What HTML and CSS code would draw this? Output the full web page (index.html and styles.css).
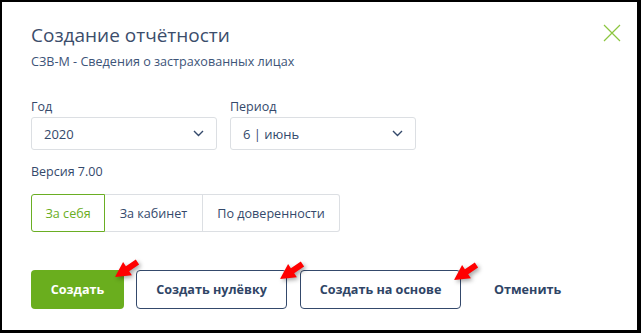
FILE: index.html
```html
<!DOCTYPE html>
<html lang="ru">
<head>
    <meta charset="utf-8">
    <link rel="stylesheet" href="styles.css">
</head>
<body>
    <!-- Окно создания отчётности -->
    <div class="frame">
        <div class="dialog">
            <div class="header">
                <div>
                    <h1 class="title">Создание отчётности</h1>
                    <div class="subtitle">СЗВ-М - Сведения о застрахованных лицах</div>
                </div>
                <svg class="close" width="18" height="18" viewBox="0 0 18 18">
                    <path d="M1 1L17 17M17 1L1 17" stroke="#8cc63f" stroke-width="1.2" fill="none"/>
                </svg>
            </div>

            <!-- Выбор года и периода -->
            <div class="fields">
                <div class="field">
                    <div class="label">Год</div>
                    <div class="select">
                        <span>2020</span>
                        <svg width="11" height="7" viewBox="0 0 11 7"><path d="M1 1L5.5 5.5L10 1" stroke="#34496b" stroke-width="1.4" fill="none"/></svg>
                    </div>
                </div>
                <div class="field">
                    <div class="label">Период</div>
                    <div class="select">
                        <span>6 | июнь</span>
                        <svg width="11" height="7" viewBox="0 0 11 7"><path d="M1 1L5.5 5.5L10 1" stroke="#34496b" stroke-width="1.4" fill="none"/></svg>
                    </div>
                </div>
            </div>

            <div class="version">Версия 7.00</div>

            <div class="tabs">
                <div class="tab active">За себя</div>
                <div class="tab">За кабинет</div>
                <div class="tab">По доверенности</div>
            </div>

            <!-- Кнопки -->
            <div class="buttons">
                <div class="btn btn-green">Создать</div>
                <div class="btn btn-outline btn-zero">Создать нулёвку</div>
                <div class="btn btn-outline btn-base">Создать на основе</div>
                <div class="btn btn-link">Отменить</div>
            </div>
        </div>

        <!-- Стрелки-пометки -->
        <svg class="arrow arrow1" width="30" height="24" viewBox="0 0 30 24"><polygon points="1,20 9.1,5.1 11.9,9.2 21.8,2.6 25.1,7.6 15.2,14.2 17.9,18.3" fill="#ff0000"/></svg>
        <svg class="arrow arrow2" width="30" height="24" viewBox="0 0 30 24"><polygon points="1,20 9.1,5.1 11.9,9.2 21.8,2.6 25.1,7.6 15.2,14.2 17.9,18.3" fill="#ff0000"/></svg>
        <svg class="arrow arrow3" width="30" height="24" viewBox="0 0 30 24"><polygon points="1,20 9.1,5.1 11.9,9.2 21.8,2.6 25.1,7.6 15.2,14.2 17.9,18.3" fill="#ff0000"/></svg>
    </div>
</body>
</html>
```

FILE: styles.css
```css
body {
    margin: 0;
    padding: 0;
    background-color: #000000;
    font-family: "Open Sans", Arial, sans-serif;
    color: #34496b;
}

.frame {
    position: relative;
    width: 641px;
    height: 333px;
    box-sizing: border-box;
    border-style: solid;
    border-color: #000000;
    border-width: 2px 4px 3px 2px;
    background-color: #ffffff;
}

.dialog {
    padding: 20px 0 0 29px;
}

.header {
    display: flex;
    justify-content: space-between;
    padding-right: 16px;
}

.title {
    margin: 0;
    font-size: 19px;
    font-weight: normal;
    line-height: 26px;
    color: #3b4d6b;
}

.subtitle {
    margin-top: 6px;
    font-size: 12.6px;
    line-height: 16px;
    color: #3d5478;
}

.close {
    margin-top: 2px;
}

.fields {
    display: flex;
    gap: 13px;
    margin-top: 29px;
}

.label {
    font-size: 12.5px;
    line-height: 16px;
    height: 18px;
}

.select {
    width: 186px;
    height: 33px;
    box-sizing: border-box;
    border: 1px solid #dcdfe3;
    border-radius: 3px;
    display: flex;
    align-items: center;
    justify-content: space-between;
    padding: 0 12px 0 12px;
    font-size: 13px;
}

.version {
    margin-top: 14px;
    font-size: 12.5px;
    line-height: 16px;
}

.tabs {
    display: flex;
    margin-top: 14px;
}

.tab {
    height: 38px;
    box-sizing: border-box;
    border: 1px solid #dcdfe3;
    border-left: none;
    display: flex;
    align-items: center;
    padding: 0 14.5px;
    font-size: 12.6px;
}

.tab:first-child {
    border-left: 1px solid #dcdfe3;
    border-radius: 3px 0 0 3px;
}

.tab:last-child {
    border-radius: 0 3px 3px 0;
}

.tab.active {
    border: 1px solid #6aae23;
    color: #6aae23;
    padding: 0 13.5px;
}

.buttons {
    display: flex;
    margin-top: 38px;
}

.btn {
    height: 39px;
    box-sizing: border-box;
    display: flex;
    align-items: center;
    justify-content: center;
    border-radius: 4px;
    font-size: 12.6px;
    font-weight: bold;
    color: #2f4566;
}

.btn-green {
    width: 93px;
    background-color: #6aae1e;
    color: #ffffff;
}

.btn-outline {
    border: 1px solid #34496b;
}

.btn-zero {
    width: 151px;
    margin-left: 12px;
}

.btn-base {
    width: 161px;
    margin-left: 13px;
}

.btn-link {
    margin-left: 33px;
}

.arrow {
    position: absolute;
    filter: drop-shadow(2px 2px 2px rgba(0, 0, 0, 0.35));
}

.arrow1 {
    left: 112px;
    top: 255px;
}

.arrow2 {
    left: 277px;
    top: 257px;
}

.arrow3 {
    left: 451px;
    top: 258px;
}
```
